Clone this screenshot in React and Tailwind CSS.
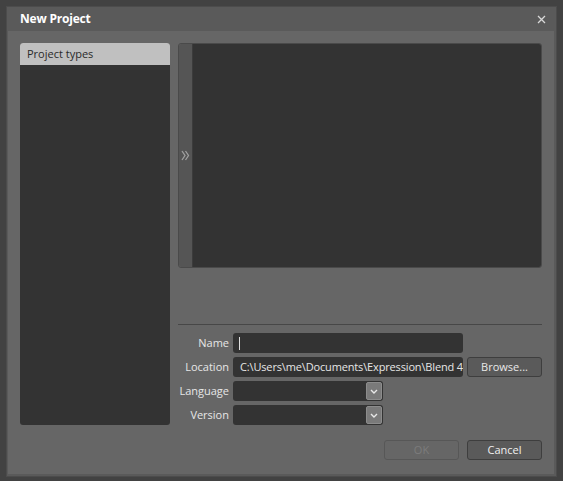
import React from "react";

function Dropdown() {
    return (
        <div className="w-[150px] h-5 bg-[#333333] rounded-[3px] flex justify-end items-center pr-[1px]">
            <div className="w-4 h-[18px] bg-[#7a7a7a] border border-[#8c8c8c] rounded-[2px] flex items-center justify-center">
                <svg width="8" height="5" viewBox="0 0 8 5">
                    <path d="M1 1 L4 4 L7 1" stroke="#e8e8e8" strokeWidth="1.4" fill="none" />
                </svg>
            </div>
        </div>
    );
}

export default function App() {
    return (
        <div
            className="w-[563px] h-[481px] bg-[#424242] p-[6px] text-[#e6e6e6]"
            style={{ fontFamily: '"Open Sans", "Noto Sans", sans-serif' }}
        >
            <div className="w-[551px] h-[471px] bg-[#5a5a5a] border border-[#4c4c4c] flex flex-col">
                {/* Title bar */}
                <div className="h-6 flex items-center justify-between pl-[13px] pr-[10px] shrink-0">
                    <span className="text-[12px] font-bold text-white tracking-[-0.2px]">New Project</span>
                    <svg width="9" height="9" viewBox="0 0 9 9">
                        <path d="M1 1 L8 8 M8 1 L1 8" stroke="#d8d8d8" strokeWidth="1.3" />
                    </svg>
                </div>

                {/* Body */}
                <div className="flex-1 ml-[1px] mb-[2px] mr-[2px] bg-[#666666] flex pt-[12px] pl-[12px] pr-[12px] pb-[14px] gap-2">
                    {/* Project types */}
                    <div className="w-[150px] h-[382px] bg-[#333333] rounded-[3px] overflow-hidden flex flex-col">
                        <div className="h-[22px] bg-[#c0c0c0] text-[#2a2a2a] text-[11px] flex items-center pl-[7px]">
                            Project types
                        </div>
                    </div>

                    {/* Right side */}
                    <div className="flex-1 flex flex-col">
                        <div className="h-[225px] flex rounded-[3px] overflow-hidden border border-[#4a4a4a]">
                            <div className="w-[14px] bg-[#555555] border-r border-[#3c3c3c] flex items-center justify-center">
                                <svg width="9" height="11" viewBox="0 0 9 11">
                                    <path d="M1 1 L4 5.5 L1 10 M4.5 1 L7.5 5.5 L4.5 10" stroke="#a0a0a0" strokeWidth="1.3" fill="none" />
                                </svg>
                            </div>
                            <div className="flex-1 bg-[#333333]" />
                        </div>

                        <div className="h-px bg-[#474747] mt-[56px]" />

                        <div className="mt-[8px] flex flex-col gap-1 text-[11px]">
                            <div className="flex items-center h-5">
                                <span className="w-[55px] text-right pr-[4px]">Name</span>
                                <div className="w-[230px] h-5 bg-[#333333] rounded-[3px] flex items-center pl-[6px]">
                                    <div className="w-px h-[13px] bg-[#e0e0e0]" />
                                </div>
                            </div>
                            <div className="flex items-center h-5">
                                <span className="w-[55px] text-right pr-[4px]">Location</span>
                                <div className="w-[230px] h-5 bg-[#333333] rounded-[3px] flex items-center pl-[7px] overflow-hidden">
                                    <span className="whitespace-nowrap tracking-[-0.15px]">C:\Users\me\Documents\Expression\Blend 4</span>
                                </div>
                                <button className="ml-[4px] w-[75px] h-5 bg-[#5a5a5a] border border-[#3e3e3e] rounded-[3px] text-[11px] text-[#e8e8e8]">
                                    Browse...
                                </button>
                            </div>
                            <div className="flex items-center h-5">
                                <span className="w-[55px] text-right pr-[4px]">Language</span>
                                <Dropdown />
                            </div>
                            <div className="flex items-center h-5">
                                <span className="w-[55px] text-right pr-[4px]">Version</span>
                                <Dropdown />
                            </div>
                        </div>

                        <div className="mt-auto flex justify-end gap-2 text-[11px]">
                            <button className="w-[75px] h-5 border border-[#575757] rounded-[3px] text-[#7c7c7c]">
                                OK
                            </button>
                            <button className="w-[75px] h-5 bg-[#5a5a5a] border border-[#3e3e3e] rounded-[3px] text-[#f0f0f0]">
                                Cancel
                            </button>
                        </div>
                    </div>
                </div>
            </div>
        </div>
    );
}
